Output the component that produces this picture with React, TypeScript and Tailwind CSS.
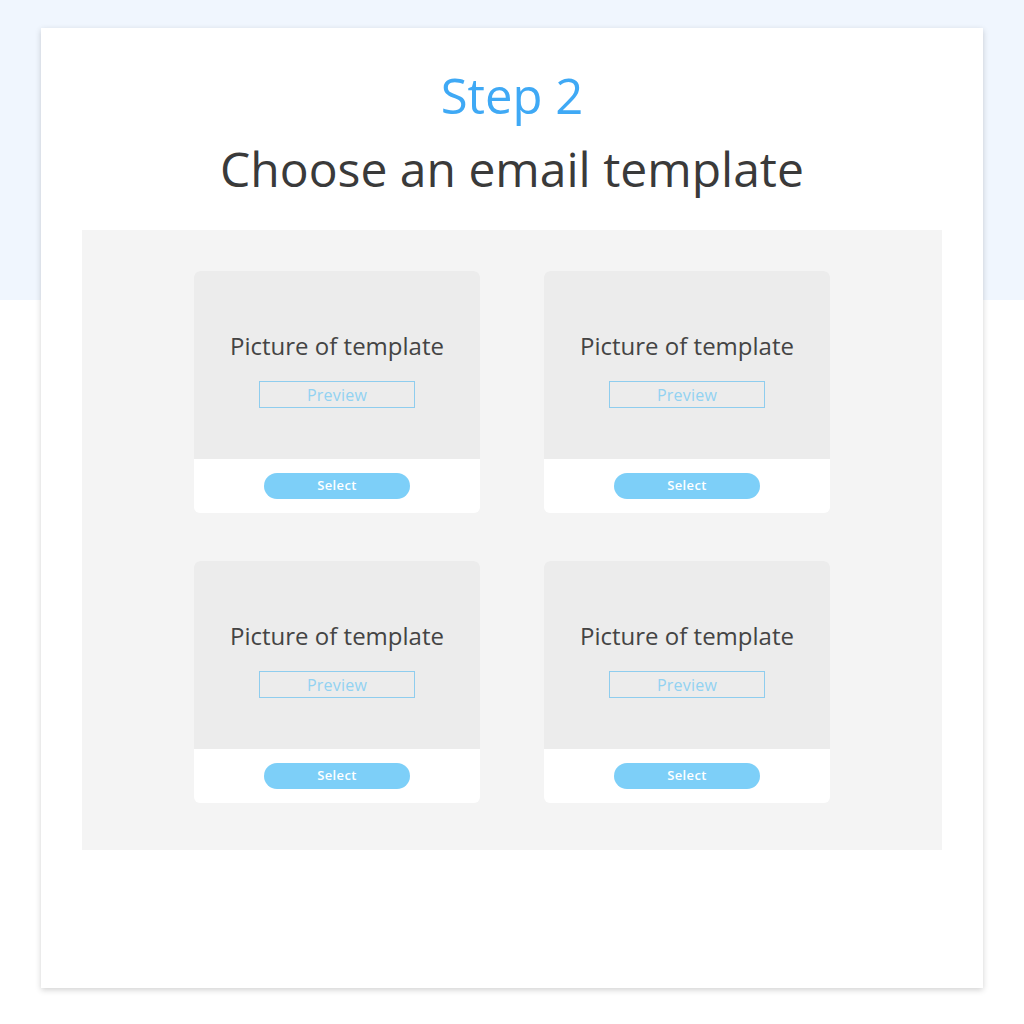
import React from 'react';

const TemplateCard: React.FC = () => (
  <div className="w-[286px] h-[242px] rounded-[6px] overflow-hidden bg-white flex flex-col">
    <div className="h-[188px] bg-[#ececec] flex flex-col items-center pt-[60px]">
      <p className="text-[24px] leading-[30px] text-[#444444]">Picture of template</p>
      <div className="mt-[20px] w-[156px] h-[27px] border border-[#8fcdee] flex items-center justify-center text-[16px] tracking-[0.2px] text-[#92d2f2]">
        Preview
      </div>
    </div>
    <div className="flex-1 flex items-center justify-center">
      <button className="w-[146px] h-[26px] rounded-full bg-[#7dcff8] text-white text-[13px] tracking-[0.4px] font-semibold">
        Select
      </button>
    </div>
  </div>
);

export default function App() {
  return (
    <div className="relative w-[1024px] h-[1024px] bg-white overflow-hidden font-['Open_Sans',sans-serif]">
      <div className="absolute inset-x-0 top-0 h-[300px] bg-[#f0f6fe]" />
      <div className="relative mx-auto mt-[28px] w-[942px] h-[960px] bg-white shadow-[0_2px_6px_rgba(0,0,0,0.18)] flex flex-col items-center">
        <h2 className="mt-[38px] text-[49px] leading-[58px] text-[#3fa9f5]">Step 2</h2>
        <h1 className="mt-[16px] text-[48px] leading-[58px] text-[#3a3a3a]">Choose an email template</h1>
        <div className="mt-[32px] w-[860px] h-[620px] bg-[#f4f4f4] pt-[41px]">
          <div className="grid grid-cols-[286px_286px] gap-x-[64px] gap-y-[48px] justify-center">
            <TemplateCard />
            <TemplateCard />
            <TemplateCard />
            <TemplateCard />
          </div>
        </div>
      </div>
    </div>
  );
}
